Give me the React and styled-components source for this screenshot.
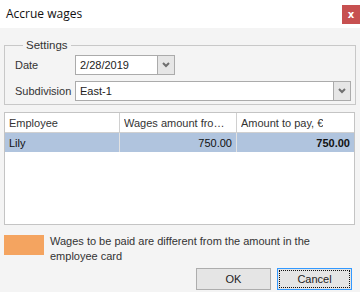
import React from 'react';
import styled, { createGlobalStyle } from 'styled-components';

const GlobalStyle = createGlobalStyle`
    html, body {
        margin: 0;
        padding: 0;
        background: #f4f4f4;
    }
    body {
        font-family: "Liberation Sans", Arial, sans-serif;
        font-size: 11px;
        color: #1e1e1e;
    }
`

const Dialog = styled.div`
    width: 360px;
    height: 292px;
    display: flex;
    flex-direction: column;
    background: #f4f4f4;
    overflow: hidden;
`

const TitleBar = styled.div`
    height: 28px;
    flex-shrink: 0;
    background: #ffffff;
    display: flex;
    align-items: flex-start;
    justify-content: space-between;
`

const Title = styled.div`
    font-family: "Open Sans", sans-serif;
    font-size: 12px;
    color: #111;
    padding: 5px 0 0 6px;
`

const CloseButton = styled.div`
    margin-top: 5px;
    width: 18px;
    height: 19px;
    background: #c75050;
    color: #fff;
    font-family: "DejaVu Sans", sans-serif;
    font-weight: bold;
    font-size: 10px;
    display: flex;
    align-items: center;
    justify-content: center;
`

const Body = styled.div`
    flex: 1;
    display: flex;
    flex-direction: column;
    padding: 11px 5px 0 4px;
`

const GroupBox = styled.fieldset`
    margin: 0;
    padding: 4px 4px 3px 10px;
    border: 1px solid #c8c8c8;
    display: flex;
    flex-direction: column;
    gap: 6px;
`

const Legend = styled.legend`
    padding: 0 3px;
    margin-left: 8px;
    color: #333;
    line-height: 12px;
    font-size: 11.5px;
`

const FieldRow = styled.div`
    display: flex;
    align-items: center;
    height: 20px;
`

const Label = styled.div`
    width: 60px;
    flex-shrink: 0;
    color: #333;
`

const Combo = styled.div`
    display: flex;
    width: ${({ $width }) => $width};
    height: 20px;
    border: 1px solid #ababab;
    box-sizing: border-box;
    background: #fff;
`

const ComboText = styled.div`
    flex: 1;
    padding: 0 4px;
    display: flex;
    align-items: center;
    color: #222;
`

const ComboButton = styled.div`
    width: 16px;
    border-left: 1px solid #ababab;
    background: #e6e6e6;
    display: flex;
    align-items: center;
    justify-content: center;
`

const Chevron = () => (
    <svg width="8" height="6" viewBox="0 0 8 6">
        <path d="M1 1 L4 4 L7 1" stroke="#6f6f6f" strokeWidth="2" fill="none" />
    </svg>
)

const Grid = styled.div`
    margin-top: 7px;
    height: 111px;
    border: 1px solid #c4c4c4;
    background: #fff;
    display: flex;
    flex-direction: column;
`

const GridRow = styled.div`
    display: grid;
    grid-template-columns: 115px 117px 1fr;
    height: 19px;
    background: ${({ $selected }) => ($selected ? '#b0c4de' : '#fff')};
    border-bottom: ${({ $header }) => ($header ? '1px solid #d0d0d0' : 'none')};
`

const Cell = styled.div`
    display: flex;
    align-items: center;
    justify-content: ${({ $right }) => ($right ? 'flex-end' : 'flex-start')};
    padding: 0 4px;
    font-weight: ${({ $bold }) => ($bold ? 'bold' : 'normal')};
    color: ${({ $header }) => ($header ? '#333' : '#111')};
    border-right: 1px solid ${({ $header }) => ($header ? '#d0d0d0' : '#e2e2e2')};
    white-space: nowrap;
    overflow: hidden;
    min-width: 0;

    &:last-child {
        border-right: none;
    }
`

const CellText = styled.span`
    overflow: hidden;
    text-overflow: ellipsis;
`

const Legendary = styled.div`
    margin-top: 10px;
    display: flex;
    gap: 6px;
`

const Swatch = styled.div`
    width: 40px;
    height: 20px;
    flex-shrink: 0;
    background: #f4a460;
`

const Note = styled.div`
    line-height: 15px;
    margin-top: -1px;
    color: #333;
    width: 290px;
`

const Buttons = styled.div`
    margin-top: auto;
    margin-bottom: 2px;
    display: flex;
    justify-content: flex-end;
    gap: 6px;
    padding-right: 3px;
`

const Button = styled.div`
    width: 75px;
    height: 22px;
    box-sizing: border-box;
    border: 1px solid ${({ $focused }) => ($focused ? '#3399ff' : '#adadad')};
    background: #e5e5e5;
    display: flex;
    align-items: center;
    justify-content: center;
    padding: 1px;
    color: #222;
`

const ButtonFace = styled.div`
    flex: 1;
    align-self: stretch;
    display: flex;
    align-items: center;
    justify-content: center;
    border: 1px dotted ${({ $focused }) => ($focused ? '#111' : 'transparent')};
`

const rows = [
    { employee: 'Lily', wages: '750.00', amount: '750.00' },
]

const App = () => {
    return (
        <Dialog>
            <GlobalStyle />
            <TitleBar>
                <Title>Accrue wages</Title>
                <CloseButton>x</CloseButton>
            </TitleBar>
            <Body>
                <GroupBox>
                    <Legend>Settings</Legend>
                    <FieldRow>
                        <Label>Date</Label>
                        <Combo $width="100px">
                            <ComboText>2/28/2019</ComboText>
                            <ComboButton><Chevron /></ComboButton>
                        </Combo>
                    </FieldRow>
                    <FieldRow>
                        <Label>Subdivision</Label>
                        <Combo $width="276px">
                            <ComboText>East-1</ComboText>
                            <ComboButton><Chevron /></ComboButton>
                        </Combo>
                    </FieldRow>
                </GroupBox>
                <Grid>
                    <GridRow $header>
                        <Cell $header><CellText>Employee</CellText></Cell>
                        <Cell $header><CellText>Wages amount from employee card</CellText></Cell>
                        <Cell $header><CellText>Amount to pay, €</CellText></Cell>
                    </GridRow>
                    {rows.map((row) => (
                        <GridRow key={row.employee} $selected>
                            <Cell>{row.employee}</Cell>
                            <Cell $right>{row.wages}</Cell>
                            <Cell $right $bold>{row.amount}</Cell>
                        </GridRow>
                    ))}
                </Grid>
                <Legendary>
                    <Swatch />
                    <Note>Wages to be paid are different from the amount in the employee card</Note>
                </Legendary>
                <Buttons>
                    <Button><ButtonFace>OK</ButtonFace></Button>
                    <Button $focused><ButtonFace $focused>Cancel</ButtonFace></Button>
                </Buttons>
            </Body>
        </Dialog>
    )
}

export default App
